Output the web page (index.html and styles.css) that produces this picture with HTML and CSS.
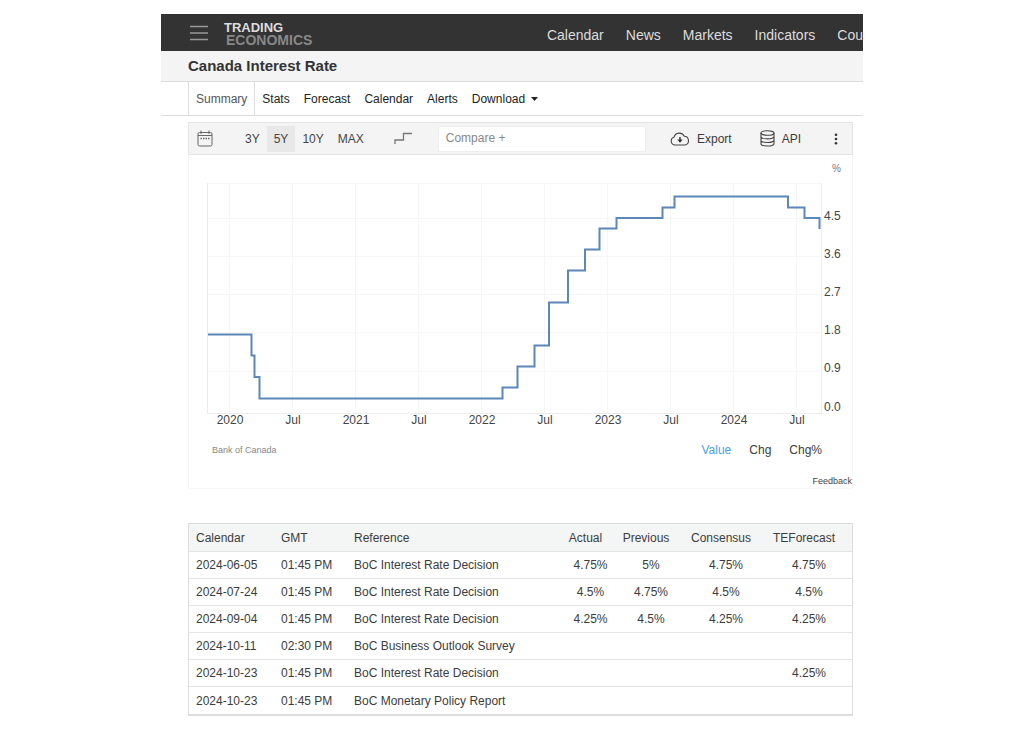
FILE: index.html
```html
<!DOCTYPE html>
<html lang="en">
<head>
<meta charset="utf-8">
<meta name="viewport" content="width=device-width, initial-scale=1">
<title>Canada Interest Rate</title>
<link rel="stylesheet" href="styles.css">
</head>
<body>
<div class="page">
  <header class="topbar">
    <button class="menu-button" type="button" aria-label="Menu">
      <svg width="20" height="16" viewBox="0 0 20 16" fill="none" stroke="#999" stroke-width="1.5"><path d="M1 1.5h18M1 8h18M1 14.5h18"/></svg>
    </button>
    <a class="logo" href="#"><span class="logo-top">TRADING</span><span class="logo-bottom">ECONOMICS</span></a>
    <nav class="main-nav">
      <a href="#">Calendar</a>
      <a href="#">News</a>
      <a href="#">Markets</a>
      <a href="#">Indicators</a>
      <a href="#">Cou</a>
    </nav>
  </header>
  <h1 class="title">Canada Interest Rate</h1>
  <nav class="tabs">
    <a class="tab tab-active" href="#">Summary</a>
    <a class="tab" href="#">Stats</a>
    <a class="tab" href="#">Forecast</a>
    <a class="tab" href="#">Calendar</a>
    <a class="tab" href="#">Alerts</a>
    <a class="tab" href="#">Download <svg class="caret" width="7" height="4" viewBox="0 0 7 4"><path d="M0 0h7L3.500 4z" fill="#222"/></svg></a>
  </nav>
  <main class="content">
    <div class="toolbar">
      <button class="tool date-tool" type="button" aria-label="Date range">
        <svg width="16" height="17" viewBox="0 0 16 17" fill="none" stroke="#666" stroke-width="1"><rect x="1" y="2.500" width="14" height="13.500" rx="1.500"/><path d="M1 5.500h14M4 .5v3.500M12 .5v3.500"/><path d="M3.500 8.500h9" stroke-width="1.500" stroke-dasharray="1.500 1"/></svg>
      </button>
      <div class="ranges">
        <button class="range" type="button">3Y</button>
        <button class="range range-active" type="button">5Y</button>
        <button class="range" type="button">10Y</button>
        <button class="range" type="button">MAX</button>
      </div>
      <button class="tool step-tool" type="button" aria-label="Chart type">
        <svg width="19" height="13" viewBox="0 0 19 13" fill="none" stroke="#777" stroke-width="1.300"><path d="M1 12V8h8.500V1.500H18"/></svg>
      </button>
      <input class="compare" type="text" placeholder="Compare +" aria-label="Compare">
      <button class="tool export-tool" type="button">
        <svg width="20" height="14" viewBox="0 0 20 14" fill="none" stroke="#444" stroke-width="1.100"><path d="M5 13a4 4 0 0 1-1-7.800A5.500 5.500 0 0 1 14.300 4.300 4.400 4.400 0 0 1 15 13z"/><path d="M10 5v5" stroke-width="1.600"/><path d="M7.300 7.600h5.400L10 10.800z" fill="#333" stroke="none"/></svg>
        Export
      </button>
      <button class="tool api-tool" type="button">
        <svg width="15" height="17" viewBox="0 0 15 17" fill="none" stroke="#444" stroke-width="1.100"><ellipse cx="7.500" cy="3" rx="6.500" ry="2.300"/><path d="M1 3v10.800c0 3 13 3 13 0V3M1 6.600c0 3 13 3 13 0M1 10.200c0 3 13 3 13 0"/></svg>
        API
      </button>
      <button class="tool more-tool" type="button" aria-label="More">
        <svg width="4" height="12" viewBox="0 0 4 12" fill="#333"><circle cx="2" cy="1.700" r="1.300"/><circle cx="2" cy="6" r="1.300"/><circle cx="2" cy="10.300" r="1.300"/></svg>
      </button>
    </div>
    <section class="panel">
      <svg class="chart" viewBox="0 0 663 278" role="img" aria-label="Interest rate chart">
        <g class="grid">
          <path d="M19 28.500H632M19 63.500H632M19 101.500H632M19 139.500H632M19 177.500H632M19 216.500H632"/>
          <path d="M40.500 28V258M103.500 28V258M166.500 28V258M229.500 28V258M292.500 28V258M355.500 28V258M418.500 28V258M481.500 28V258M544.500 28V258M607.500 28V258"/>
        </g>
        <path class="axis" d="M18.500 28V258.500H632.500V28"/>
        <path class="series" d="M19 179.500H62.500V200.500H65.500V222H70.500V243.500H313.500V232.500H328.500V211.500H345.500V190.500H360V147.500H379V115.500H396V94.500H410.500V73.500H427.500V63H473.500V52.500H485.500V41.500H599V52.500H615.500V63H630.500V74"/>
        <g class="x-labels">
          <text x="41" y="269">2020</text><text x="104" y="269">Jul</text>
          <text x="167" y="269">2021</text><text x="230" y="269">Jul</text>
          <text x="293" y="269">2022</text><text x="356" y="269">Jul</text>
          <text x="419" y="269">2023</text><text x="482" y="269">Jul</text>
          <text x="545" y="269">2024</text><text x="608" y="269">Jul</text>
        </g>
        <g class="y-labels">
          <text class="unit" x="643" y="17">%</text>
          <text x="635" y="65">4.5</text><text x="635" y="103">3.6</text>
          <text x="635" y="141">2.7</text><text x="635" y="179">1.8</text>
          <text x="635" y="217">0.9</text><text x="635" y="256">0.0</text>
        </g>
      </svg>
      <div class="panel-row">
        <span class="source">Bank of Canada</span>
        <div class="modes">
          <a class="mode mode-active" href="#">Value</a>
          <a class="mode" href="#">Chg</a>
          <a class="mode" href="#">Chg%</a>
        </div>
      </div>
      <a class="feedback" href="#">Feedback</a>
    </section>
    <table class="events">
      <colgroup><col class="c-date"><col class="c-time"><col class="c-ref"><col class="c-actual"><col class="c-prev"><col class="c-cons"><col class="c-fore"></colgroup>
      <thead>
        <tr><th>Calendar</th><th>GMT</th><th>Reference</th><th class="num">Actual</th><th class="num">Previous</th><th class="num">Consensus</th><th class="num">TEForecast</th></tr>
      </thead>
      <tbody>
        <tr><td>2024-06-05</td><td>01:45 PM</td><td>BoC Interest Rate Decision</td><td class="num">4.75%</td><td class="num">5%</td><td class="num">4.75%</td><td class="num">4.75%</td></tr>
        <tr><td>2024-07-24</td><td>01:45 PM</td><td>BoC Interest Rate Decision</td><td class="num">4.5%</td><td class="num">4.75%</td><td class="num">4.5%</td><td class="num">4.5%</td></tr>
        <tr><td>2024-09-04</td><td>01:45 PM</td><td>BoC Interest Rate Decision</td><td class="num">4.25%</td><td class="num">4.5%</td><td class="num">4.25%</td><td class="num">4.25%</td></tr>
        <tr><td>2024-10-11</td><td>02:30 PM</td><td>BoC Business Outlook Survey</td><td></td><td></td><td></td><td></td></tr>
        <tr><td>2024-10-23</td><td>01:45 PM</td><td>BoC Interest Rate Decision</td><td></td><td></td><td></td><td class="num">4.25%</td></tr>
        <tr><td>2024-10-23</td><td>01:45 PM</td><td>BoC Monetary Policy Report</td><td></td><td></td><td></td><td></td></tr>
      </tbody>
    </table>
  </main>
</div>
</body>
</html>
```
FILE: styles.css
```css
* { box-sizing: border-box; }
body {
  margin: 0;
  background: #fff;
  color: #3c3c3c;
  font: 12px/16px "Liberation Sans", Arial, sans-serif;
}
a { color: inherit; text-decoration: none; }
button {
  margin: 0;
  padding: 0;
  border: 0;
  background: none;
  color: inherit;
  font: inherit;
  cursor: pointer;
}
svg { display: block; flex: none; }
.page { max-width: 702px; margin: 0 auto; padding: 14px 0; }

.topbar {
  display: flex;
  align-items: center;
  height: 37px;
  padding-left: 28px;
  background: #333;
  overflow: hidden;
}
.logo {
  display: flex;
  flex-direction: column;
  margin-left: 15px;
  padding-top: 3px;
  font-weight: bold;
}
.logo-top { color: #ddd; font-size: 13px; line-height: 12px; }
.logo-bottom { padding-left: 2px; color: #888; font-size: 14px; line-height: 13px; }
.main-nav {
  display: flex;
  gap: 22px;
  margin-left: auto;
  padding-top: 4px;
  color: #ddd;
  font-size: 14px;
}

.title {
  margin: 0;
  padding: 5px 27px;
  border-bottom: 1px solid #ddd;
  background: #f4f4f4;
  color: #333;
  font-size: 15px;
  line-height: 20px;
}
.tabs {
  display: flex;
  padding-left: 27px;
  border-bottom: 1px solid #ddd;
  color: #222;
}
.tab { display: flex; align-items: center; gap: 6px; height: 33px; padding: 0 7px; }
.tab-active {
  margin-bottom: -1px;
  border: solid #ddd;
  border-width: 0 1px;
  background: #fff;
  color: #555;
}

.content { padding: 6px 10px 0 27px; }
.toolbar {
  display: flex;
  align-items: center;
  height: 33px;
  padding: 0 14px 0 8px;
  border: 1px solid #e4e4e4;
  background: #f4f4f4;
}
.tool { display: flex; align-items: center; gap: 7px; }
.ranges { display: flex; margin-left: 25px; color: #444; }
.range { height: 26px; padding: 0 7px; }
.range-active { background: #e8e8e8; }
.step-tool { margin-left: 23px; }
.compare {
  flex: 1;
  min-width: 0;
  height: 26px;
  margin: 0 24px 0 25px;
  padding: 0 7px 2px;
  border: 1px solid #eee;
  background: #fff;
  color: #333;
  font: inherit;
}
.compare::placeholder { color: #888; opacity: 1; }
.api-tool { margin-left: 28px; }
.more-tool { margin-left: 33px; }

.panel { border: 1px solid #f7f7f7; border-top: 0; }
.chart { width: 100%; height: auto; font-size: 12px; }
.grid { fill: none; stroke: #f6f6f6; }
.axis { fill: none; stroke: #ececec; }
.series { fill: none; stroke: #5b88b8; stroke-width: 2; }
.x-labels { fill: #444; text-anchor: middle; }
.y-labels { fill: #444; }
.unit { fill: #777; font-size: 10px; }
.panel-row {
  display: flex;
  align-items: center;
  justify-content: space-between;
  padding: 9px 30px 0 23px;
}
.source { color: #888; font-size: 9px; }
.modes { display: flex; gap: 18px; }
.mode-active { color: #4a9fe8; }
.feedback {
  display: block;
  padding-top: 16px;
  color: #444;
  font-size: 9px;
  line-height: 14px;
  text-align: right;
}

.events {
  width: 100%;
  margin-top: 34px;
  border: 1px solid #ddd;
  border-bottom: 2px solid #ddd;
  border-collapse: separate;
  border-spacing: 0;
  table-layout: fixed;
}
.events th, .events td {
  height: 27px;
  padding: 0 7px;
  border-bottom: 1px solid #e4e4e4;
  font-weight: normal;
  text-align: left;
  white-space: nowrap;
}
.events th { height: 28px; background: #f4f5f5; }
.events tbody tr:last-child td { border-bottom: 0; }
.events .num { text-align: center; }
.events th.num { padding: 0 13px 0 3px; }
.c-date { width: 85px; }
.c-time { width: 73px; }
.c-ref { width: 33%; }
.c-actual { width: 51px; }
.c-prev { width: 70px; }
.c-cons { width: 80px; }
.c-fore { width: 86px; }
```
